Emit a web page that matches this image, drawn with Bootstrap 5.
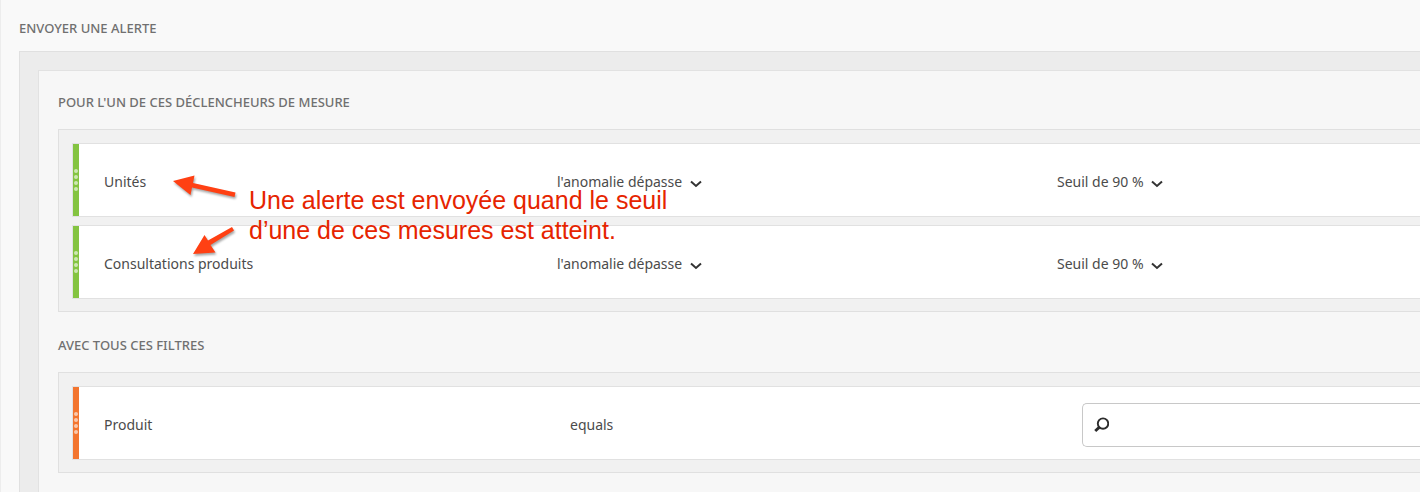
<!DOCTYPE html>
<html lang="fr">
<head>
<meta charset="utf-8">
<meta name="viewport" content="width=device-width, initial-scale=1">
<title>Envoyer une alerte</title>
<link href="https://cdn.jsdelivr.net/npm/bootstrap@5.3.0/dist/css/bootstrap.min.css" rel="stylesheet">
<style>
  body { background: #f9f9f9; color: #4b4b4b; font: 14px/20px "Noto Sans", "Open Sans", sans-serif; }
  .alert-page { border-left: 1px solid #ededed; padding: 18px 0 0 18px; }
  .section-title { font-size: 13px; line-height: 20px; color: #707070; text-transform: uppercase; font-weight: 500; margin: 0; }
  .outer-panel { background: #ececec; border: solid #e0e0e0; border-width: 1px 0 0 1px; margin-top: 13px; padding: 18px 0 0 18px; }
  .inner-panel { background: #f7f7f7; border: solid #e2e2e2; border-width: 1px 0 0 1px; padding: 21px 0 16px 19px; }
  .rule-group { background: #f1f1f1; border: 1px solid #e0e0e0; border-right: 0; padding: 13px 0 12px 13px; margin-top: 17px; }
  .rule-group + .section-title { margin-top: 23px; }
  .rule-list { gap: 8px; }
  .rule { background: #fff; border: 1px solid #e1e1e1; border-right: 0; height: 74px; }
  .handle { width: 6px; gap: 2px; background: #84c441; }
  .handle i { width: 4px; height: 4px; border-radius: 50%; background: rgba(255,255,255,.6); }
  .handle-filter { background: #f3752f; }
  .rule-body { display: grid; grid-template-columns: 453fr 500fr 363fr; align-items: center; padding: 4px 0 0 25px; }
  .filter-body { grid-template-columns: 466fr 512fr 338fr; padding-top: 3px; }
  .plain-select {
    width: auto; border: 0; padding: 0 19px 0 0; font-size: 14px; line-height: 20px; color: #4b4b4b;
    background: transparent url("data:image/svg+xml,%3Csvg xmlns='http://www.w3.org/2000/svg' viewBox='0 0 12 8'%3E%3Cpath d='M1 1.5l5 4.5 5-4.5' fill='none' stroke='%23333' stroke-width='2'/%3E%3C/svg%3E") right 0 top 8px / 12px 8px no-repeat;
  }
  .search-box { height: 44px; background: #fff; border: 1px solid #c8c8c8; border-right: 0; border-radius: 5px 0 0 5px; padding-left: 11px; }
  .note { left: 0; top: 0; pointer-events: none; }
  .note-text { left: 190px; top: 55px; color: #e62400; font: 25px/30px "Liberation Sans", Arial, sans-serif; white-space: nowrap; }
  .note-arrows { left: 106px; top: 40px; filter: drop-shadow(1px 2px 1px rgba(0,0,0,.35)); }
</style>
</head>
<body>
<main class="alert-page min-vh-100 d-flex flex-column">
  <h1 class="section-title">Envoyer une alerte</h1>
  <div class="outer-panel flex-grow-1 d-flex flex-column">
    <div class="inner-panel flex-grow-1">
      <h2 class="section-title">Pour l'un de ces déclencheurs de mesure</h2>
      <section class="rule-group position-relative">
        <div class="rule-list d-flex flex-column">
          <div class="rule d-flex">
            <div class="handle d-flex flex-column align-items-center justify-content-center"><i></i><i></i><i></i><i></i></div>
            <div class="rule-body flex-grow-1">
              <span>Unités</span>
              <div><select class="form-select plain-select" aria-label="Condition pour Unités"><option>l'anomalie dépasse</option></select></div>
              <div><select class="form-select plain-select" aria-label="Seuil pour Unités"><option>Seuil de 90 %</option></select></div>
            </div>
          </div>
          <div class="rule d-flex">
            <div class="handle d-flex flex-column align-items-center justify-content-center"><i></i><i></i><i></i><i></i></div>
            <div class="rule-body flex-grow-1">
              <span>Consultations produits</span>
              <div><select class="form-select plain-select" aria-label="Condition pour Consultations produits"><option>l'anomalie dépasse</option></select></div>
              <div><select class="form-select plain-select" aria-label="Seuil pour Consultations produits"><option>Seuil de 90 %</option></select></div>
            </div>
          </div>
        </div>
        <div class="note position-absolute">
          <svg class="note-arrows position-absolute" width="80" height="95" viewBox="165 170 80 95" aria-hidden="true">
            <path d="M173 181L194.500 175.500L193 183L235.500 192.500L234.500 197L192 187.500L190.500 195Z" fill="#ff4013"/>
            <path d="M193 254L204.500 235L208 240.500L232 227L234 230.500L210.500 245L215.500 252.500Z" fill="#ff4013"/>
          </svg>
          <div class="note-text position-absolute">Une alerte est envoyée quand le seuil<br>d’une de ces mesures est atteint.</div>
        </div>
      </section>
      <h2 class="section-title">Avec tous ces filtres</h2>
      <section class="rule-group">
        <div class="rule d-flex">
          <div class="handle handle-filter d-flex flex-column align-items-center justify-content-center"><i></i><i></i><i></i><i></i></div>
          <div class="rule-body filter-body flex-grow-1">
            <label for="product">Produit</label>
            <span>equals</span>
            <div class="search-box d-flex align-items-center">
              <svg width="16" height="16" viewBox="0 0 16 16" fill="none" stroke="#2c2c2c" aria-hidden="true">
                <circle cx="9.500" cy="6.500" r="5.500" stroke-width="2"/>
                <path d="M5.500 10.500L1.300 14.300" stroke-width="3"/>
              </svg>
              <input id="product" type="text" class="form-control border-0 shadow-none bg-transparent">
            </div>
          </div>
        </div>
      </section>
    </div>
  </div>
</main>
<script src="https://cdn.jsdelivr.net/npm/bootstrap@5.3.0/dist/js/bootstrap.bundle.min.js"></script>
</body>
</html>
